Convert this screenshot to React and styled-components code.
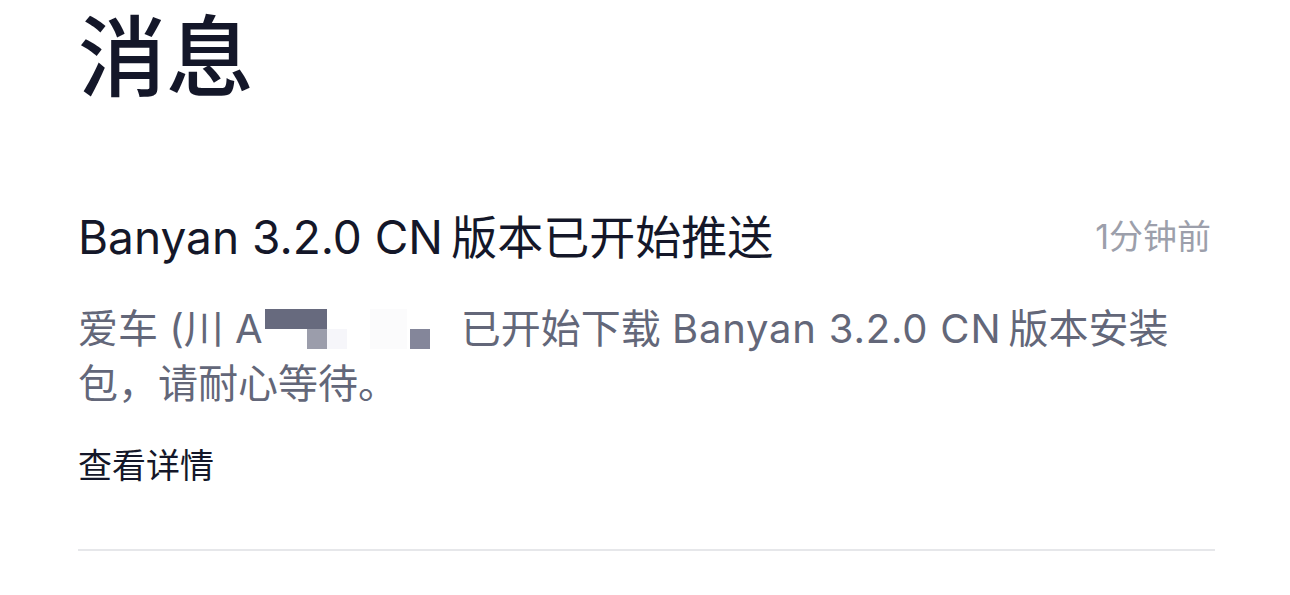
import React from 'react';
import styled, { createGlobalStyle } from 'styled-components';

const GlobalStyle = createGlobalStyle`
  html, body {
    margin: 0;
    padding: 0;
    background: #ffffff;
  }
  body {
    font-family: Inter, "Noto Sans CJK SC", sans-serif;
    -webkit-font-smoothing: antialiased;
  }
`;

const Page = styled.div`
  width: 1290px;
  height: 595px;
  padding: 0 75px 0 78px;
  box-sizing: border-box;
  overflow: hidden;
`;

const Title = styled.h1`
  margin: 0;
  padding-top: 10px;
  font-size: 88px;
  line-height: 94px;
  font-weight: 500;
  color: #141729;
`;

const Item = styled.div`
  display: flex;
  flex-direction: column;
  margin-top: 103px;
  padding-bottom: 59px;
  border-bottom: 2px solid #e6e7ea;
`;

const Head = styled.div`
  display: flex;
  align-items: center;
  justify-content: space-between;
`;

const ItemTitle = styled.div`
  font-size: 46px;
  line-height: 60px;
  font-weight: 400;
  color: #141729;
`;

const Time = styled.div`
  font-size: 34px;
  line-height: 60px;
  color: #9c9fab;
  padding-right: 4px;
`;

const Body = styled.p`
  margin: 34px 0 0;
  font-size: 40px;
  line-height: 55px;
  color: #636779;
`;

const Latin = styled.span`
  letter-spacing: 0.8px;
`;

// mosaic that hides the licence plate, drawn over the text line
const Redacted = styled.span`
  position: relative;
  display: inline-block;
  width: 196px;
  height: 40px;
  vertical-align: -6px;
  margin-left: 2px;
`;

const Block = styled.span`
  position: absolute;
  left: ${p => p.$x}px;
  top: ${p => p.$y}px;
  width: ${p => p.$w}px;
  height: ${p => p.$h}px;
  background: ${p => p.$c};
`;

const Link = styled.a`
  display: block;
  margin-top: 31px;
  font-size: 34px;
  line-height: 48px;
  color: #141729;
  text-decoration: none;
`;

export default function App() {
  return (
    <>
      <GlobalStyle />
      <Page>
        <Title>消息</Title>
        <Item>
          <Head>
            <ItemTitle>Banyan 3.2.0 CN{'\u2009'}版本已开始推送</ItemTitle>
            <Time>1分钟前</Time>
          </Head>
          <Body>
            爱车 (川 A
            <Redacted>
              <Block $x={0} $y={0} $w={62} $h={20} $c="#676a7e" />
              <Block $x={42} $y={20} $w={20} $h={20} $c="#9b9dab" />
              <Block $x={62} $y={20} $w={20} $h={20} $c="#f6f6fa" />
              <Block $x={105} $y={0} $w={37} $h={40} $c="#fbfbfc" />
              <Block $x={145} $y={20} $w={20} $h={20} $c="#84869a" />
            </Redacted>
            已开始下载 <Latin>Banyan 3.2.0 CN</Latin>{'\u2009'}版本安装
            <br />
            包，请耐心等待。
          </Body>
          <Link href="#">查看详情</Link>
        </Item>
      </Page>
    </>
  );
}
